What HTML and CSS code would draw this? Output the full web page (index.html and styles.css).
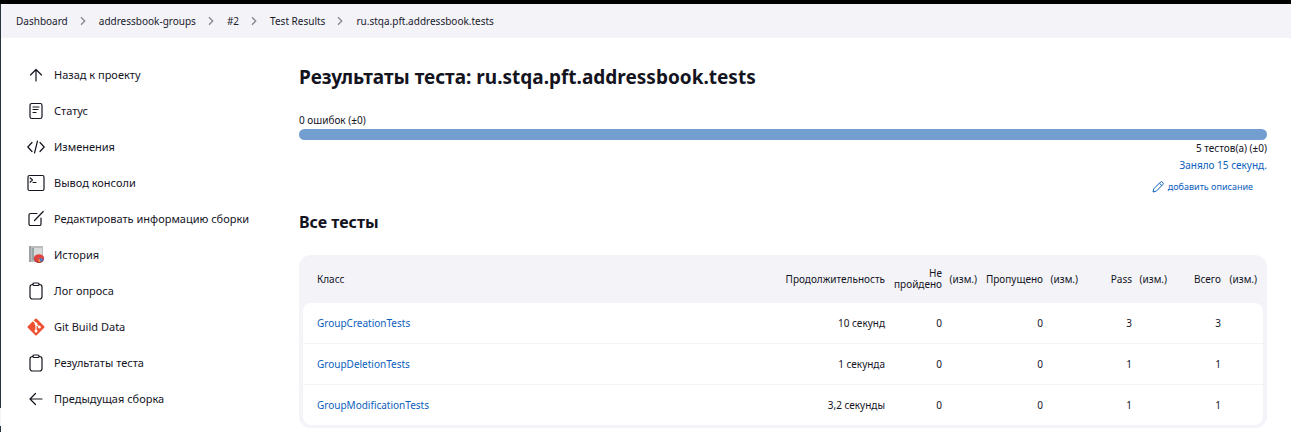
FILE: index.html
```html
<!DOCTYPE html>
<html lang="ru">
<head>
<meta charset="utf-8">
<meta name="viewport" content="width=device-width, initial-scale=1">
<title>Результаты теста: ru.stqa.pft.addressbook.tests</title>
<link rel="stylesheet" href="styles.css">
</head>
<body>
<header class="topbar"></header>
<nav class="breadcrumbs" aria-label="Breadcrumbs">
  <a href="#">Dashboard</a>
  <svg class="chevron" viewBox="0 0 8 8"><path d="M2 1l3 3-3 3"/></svg>
  <a href="#">addressbook-groups</a>
  <svg class="chevron" viewBox="0 0 8 8"><path d="M2 1l3 3-3 3"/></svg>
  <a href="#">#2</a>
  <svg class="chevron" viewBox="0 0 8 8"><path d="M2 1l3 3-3 3"/></svg>
  <a href="#">Test Results</a>
  <svg class="chevron" viewBox="0 0 8 8"><path d="M2 1l3 3-3 3"/></svg>
  <a href="#">ru.stqa.pft.addressbook.tests</a>
</nav>
<div class="layout">
  <nav class="tasks" aria-label="Задачи">
    <a class="task" href="#"><svg class="icon" viewBox="0 0 18 18"><path d="M9 15V3.500M3.500 9L9 3.500 14.500 9"/></svg>Назад к проекту</a>
    <a class="task" href="#"><svg class="icon" viewBox="0 0 18 18"><rect x="3" y="1.500" width="12" height="15" rx="1.800"/><path d="M6 5h6M6 7.500h5M6 10.500h3"/></svg>Статус</a>
    <a class="task" href="#"><svg class="icon" viewBox="0 0 18 18"><path d="M5 4.500L.8 9 5 13.500M13 4.500L17.200 9 13 13.500M10.500 3l-3 12"/></svg>Изменения</a>
    <a class="task" href="#"><svg class="icon" viewBox="0 0 18 18"><rect x="1" y="1.500" width="16" height="15" rx="1.500"/><path d="M3.200 4l2.300 2-2.300 2M6 8.500h3"/></svg>Вывод консоли</a>
    <a class="task" href="#"><svg class="icon" viewBox="0 0 18 18"><path d="M10 3.500H3.500a1.500 1.500 0 0 0-1.500 1.500v9a1.500 1.500 0 0 0 1.500 1.500h9a1.500 1.500 0 0 0 1.500-1.500V8M7.500 10.500l8.700-9"/></svg>Редактировать информацию сборки</a>
    <a class="task" href="#"><svg class="icon" viewBox="0 0 18 18"><g stroke="none"><rect x="2" y="0" width="14" height="16" fill="#b9bbbc"/><rect x="2" y="0" width="2" height="16" fill="#9da1a3"/><rect x="7" y="2" width="8" height="12" fill="#d8dada"/><path d="M5 2h2v12H5z" fill="#98a6a3"/><ellipse cx="12" cy="13" rx="5" ry="4" fill="#a9252b"/><ellipse cx="12" cy="12" rx="5" ry="3.800" fill="#e14440"/><path d="M12 12l4.800 1a5 4 0 0 1-3.300 3z" fill="#4a7ac0"/><path d="M12 12l1.500 4a5 4 0 0 1-2 0z" fill="#e6a13b"/></g></svg>История</a>
    <a class="task" href="#"><svg class="icon" viewBox="0 0 18 18"><rect x="3" y="2.500" width="12" height="14.500" rx="2.500"/><rect x="6" y="1" width="6" height="2.500" rx="1" fill="#fff"/></svg>Лог опроса</a>
    <a class="task" href="#"><svg class="icon" viewBox="0 0 18 18"><rect x="2.700" y="2.700" width="12.600" height="12.600" rx="1" transform="rotate(45 9 9)" fill="#ef5030" stroke="none"/><path d="M6.500 3l2.500 2.500V13M9 5.800l3 3" stroke="#fff"/><g fill="#fff" stroke="none"><circle cx="9" cy="5.800" r="1.400"/><circle cx="9" cy="13" r="1.500"/><circle cx="12.300" cy="9.100" r="1.500"/></g></svg>Git Build Data</a>
    <a class="task" href="#"><svg class="icon" viewBox="0 0 18 18"><rect x="3" y="2.500" width="12" height="14.500" rx="2.500"/><rect x="6" y="1" width="6" height="2.500" rx="1" fill="#fff"/></svg>Результаты теста</a>
    <a class="task" href="#"><svg class="icon" viewBox="0 0 18 18"><path d="M15 9H3.500M8.500 3.500L3 9l5.500 5.500"/></svg>Предыдущая сборка</a>
  </nav>
  <main class="content">
    <h1 class="title">Результаты теста: ru.stqa.pft.addressbook.tests</h1>
    <section class="summary">
      <div>0 ошибок (±0)</div>
      <div class="bar"></div>
      <div class="total">5 тестов(а) (±0)</div>
      <a class="duration" href="#">Заняло 15 секунд.</a>
      <a class="describe" href="#"><svg class="pencil" viewBox="0 0 12 12"><path d="M1 11l.8-3.200L8.300 1.300a1.300 1.300 0 0 1 2.400 2.400L4.200 10.200zM7.500 2.200l2.300 2.300"/></svg>добавить описание</a>
    </section>
    <h2 class="subtitle">Все тесты</h2>
    <table class="results">
      <colgroup><col><col class="c-time"><col class="c-fail"><col class="c-diff"><col class="c-skip"><col class="c-diff"><col class="c-count"><col class="c-diff"><col class="c-count"><col class="c-last"></colgroup>
      <thead><tr><th>Класс</th><th>Продолжительность</th><th>Не пройдено</th><th>(изм.)</th><th>Пропущено</th><th>(изм.)</th><th>Pass</th><th>(изм.)</th><th>Всего</th><th>(изм.)</th></tr></thead>
      <tbody>
        <tr><td><a href="#">GroupCreationTests</a></td><td>10 секунд</td><td>0</td><td></td><td>0</td><td></td><td>3</td><td></td><td>3</td><td></td></tr>
        <tr><td><a href="#">GroupDeletionTests</a></td><td>1 секунда</td><td>0</td><td></td><td>0</td><td></td><td>1</td><td></td><td>1</td><td></td></tr>
        <tr><td><a href="#">GroupModificationTests</a></td><td>3,2 секунды</td><td>0</td><td></td><td>0</td><td></td><td>1</td><td></td><td>1</td><td></td></tr>
      </tbody>
    </table>
  </main>
</div>
</body>
</html>
```
FILE: styles.css
```css
* { box-sizing: border-box; }
body {
  margin: 0;
  padding-left: 1px;
  background: linear-gradient(#27333b 408px, #f3f3f8 408px, #f3f3f8 426px, #27333b 426px) left top / 1px 432px no-repeat #fff;
  color: #14141f;
  font: 11px/16px "Noto Sans", "Open Sans", sans-serif;
}
a { color: #0b5ebd; text-decoration: none; }
.topbar { height: 4px; margin-left: -1px; background: #000; }
.breadcrumbs {
  display: flex;
  align-items: center;
  gap: 10px;
  height: 34px;
  padding: 0 15px;
  background: #f3f3f8;
  font-size: 10px;
}
.breadcrumbs a { color: #20202c; white-space: nowrap; }
.chevron { width: 11px; height: 10px; flex: none; fill: none; stroke: #85858f; }
.layout { display: flex; }
.tasks {
  flex: none;
  width: 298px;
  padding: 19px 26px 0;
}
.task {
  display: flex;
  align-items: center;
  gap: 9px;
  height: 36px;
  color: #14141f;
  white-space: nowrap;
}
.icon { width: 18px; height: 18px; flex: none; fill: none; stroke: #14141f; stroke-width: 1.2; stroke-linecap: round; stroke-linejoin: round; }
.content { flex: 1; min-width: 0; padding: 25px 24px 4px 0; }
.title { margin: 0; font-size: 19px; line-height: 28px; }
.summary { display: flex; flex-direction: column; margin-top: 21px; font-size: 10px; }
.bar { height: 11px; margin-top: 1px; border-radius: 6px; background: #729fcf; }
.total { align-self: flex-end; }
.duration { align-self: flex-end; margin-top: 1px; }
.describe { display: flex; align-items: center; gap: 4px; align-self: flex-end; margin: 6px 14px 0 0; font-size: 9px; }
.pencil { width: 12px; height: 12px; fill: none; stroke: #0b5ebd; }
.subtitle { margin: 15px 0 21px; font-size: 16px; line-height: 24px; }
.results {
  width: 100%;
  table-layout: fixed;
  border-collapse: separate;
  border-spacing: 0;
  padding: 0 4px 3px;
  border-radius: 12px;
  background: #f3f3f8;
  font-size: 10px;
}
.c-time { width: 112px; }
.c-fail { width: 57px; }
.c-count { width: 54px; }
.c-diff { width: 35px; }
.c-skip { width: 66px; }
.c-last { width: 38px; }
.results th, .results td { padding: 0 4px 0 0; text-align: right; }
.results th { height: 48px; font-weight: 400; line-height: 11px; }
.results td { height: 41px; background: #fff; border-bottom: 1px solid #f3f3f8; }
.results th:first-child, .results td:first-child { padding-left: 14px; text-align: left; }
.results th:last-child { padding-right: 6px; }
.results tr:last-child td { height: 40px; border-bottom: 0; }
.results tr:first-child td:first-child { border-top-left-radius: 8px; }
.results tr:first-child td:last-child { border-top-right-radius: 8px; }
.results tr:last-child td:first-child { border-bottom-left-radius: 8px; }
.results tr:last-child td:last-child { border-bottom-right-radius: 8px; }
```
